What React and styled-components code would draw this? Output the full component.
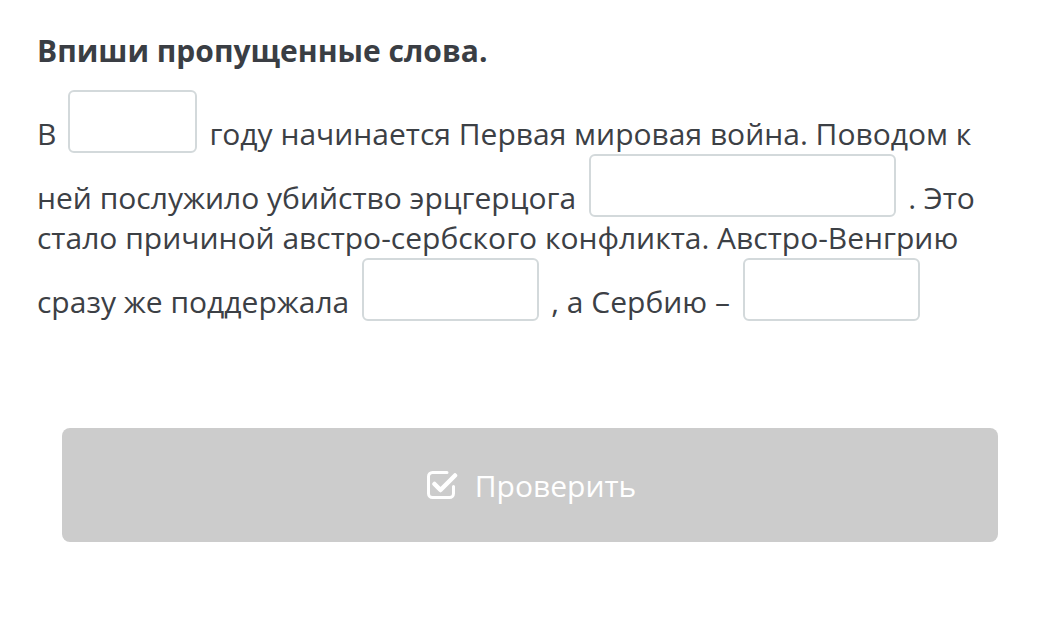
import React from "react"
import styled, { createGlobalStyle } from "styled-components"

const GlobalStyle = createGlobalStyle`
  html, body {
    margin: 0;
    padding: 0;
    background: #ffffff;
  }
  body {
    font-family: "Open Sans", "Liberation Sans", sans-serif;
  }
`

const Page = styled.div`
  width: 1053px;
  height: 628px;
  box-sizing: border-box;
  padding: 30px 40px 0 37px;
  color: #3d4146;
`

const Title = styled.h2`
  margin: 0;
  font-size: 30px;
  line-height: 42px;
  font-weight: 700;
  color: #3a3e44;
`

const Text = styled.p`
  margin: 18px 0 0;
  font-size: 30px;
  line-height: 40px;
  color: #3c4045;
`

const Blank = styled.span`
  display: inline-block;
  box-sizing: border-box;
  width: ${(p) => p.$w}px;
  height: 63px;
  margin: 0 ${(p) => p.$mr || 12}px 0 ${(p) => p.$ml || 12}px;
  vertical-align: -8px;
  border: 2px solid #d3d9db;
  border-radius: 6px;
  overflow: hidden;
  background: #fff;

  input {
    width: 100%;
    height: 100%;
    border: 0;
    outline: none;
    background: transparent;
    font: inherit;
    padding: 0 10px;
    box-sizing: border-box;
  }
`

const ButtonRow = styled.div`
  margin: 106px 15px 0 25px;
`

const CheckButton = styled.button`
  width: 100%;
  height: 114px;
  display: flex;
  align-items: center;
  justify-content: center;
  gap: 17px;
  border: 0;
  border-radius: 8px;
  background: #cccccc;
  color: #ffffff;
  font-family: "Open Sans", "Liberation Sans", sans-serif;
  font-size: 30px;
  cursor: default;

  svg {
    width: 34px;
    height: 34px;
  }
`

const CheckIcon = () => (
  <svg viewBox="0 0 34 34" fill="none" stroke="#ffffff">
    <path
      d="M23 4.5H8.5a4 4 0 0 0-4 4v17a4 4 0 0 0 4 4h17a4 4 0 0 0 4-4v-7"
      strokeWidth="3"
      strokeLinecap="round"
    />
    <path
      d="M10.5 16l6 6L31 7.5"
      strokeWidth="4.5"
      strokeLinecap="round"
      strokeLinejoin="round"
    />
  </svg>
)

const Field = ({ w, ml, mr }) => (
  <Blank $w={w} $ml={ml} $mr={mr}>
    <input type="text" aria-label="ответ" />
  </Blank>
)

export default function App() {
  return (
    <Page>
      <GlobalStyle />
      <Title>Впиши пропущенные слова.</Title>
      <Text>
        В<Field w={129} ml={12} mr={12} />году начинается Первая мировая война.
        Поводом к ней послужило убийство эрцгерцога
        <Field w={307} ml={13} mr={12} />. Это стало причиной австро-сербского
        конфликта. Австро-Венгрию сразу же поддержала
        <Field w={177} ml={13} mr={12} />, а Сербию –
        <Field w={177} ml={13} mr={12} />
      </Text>
      <ButtonRow>
        <CheckButton type="button">
          <CheckIcon />
          Проверить
        </CheckButton>
      </ButtonRow>
    </Page>
  )
}
